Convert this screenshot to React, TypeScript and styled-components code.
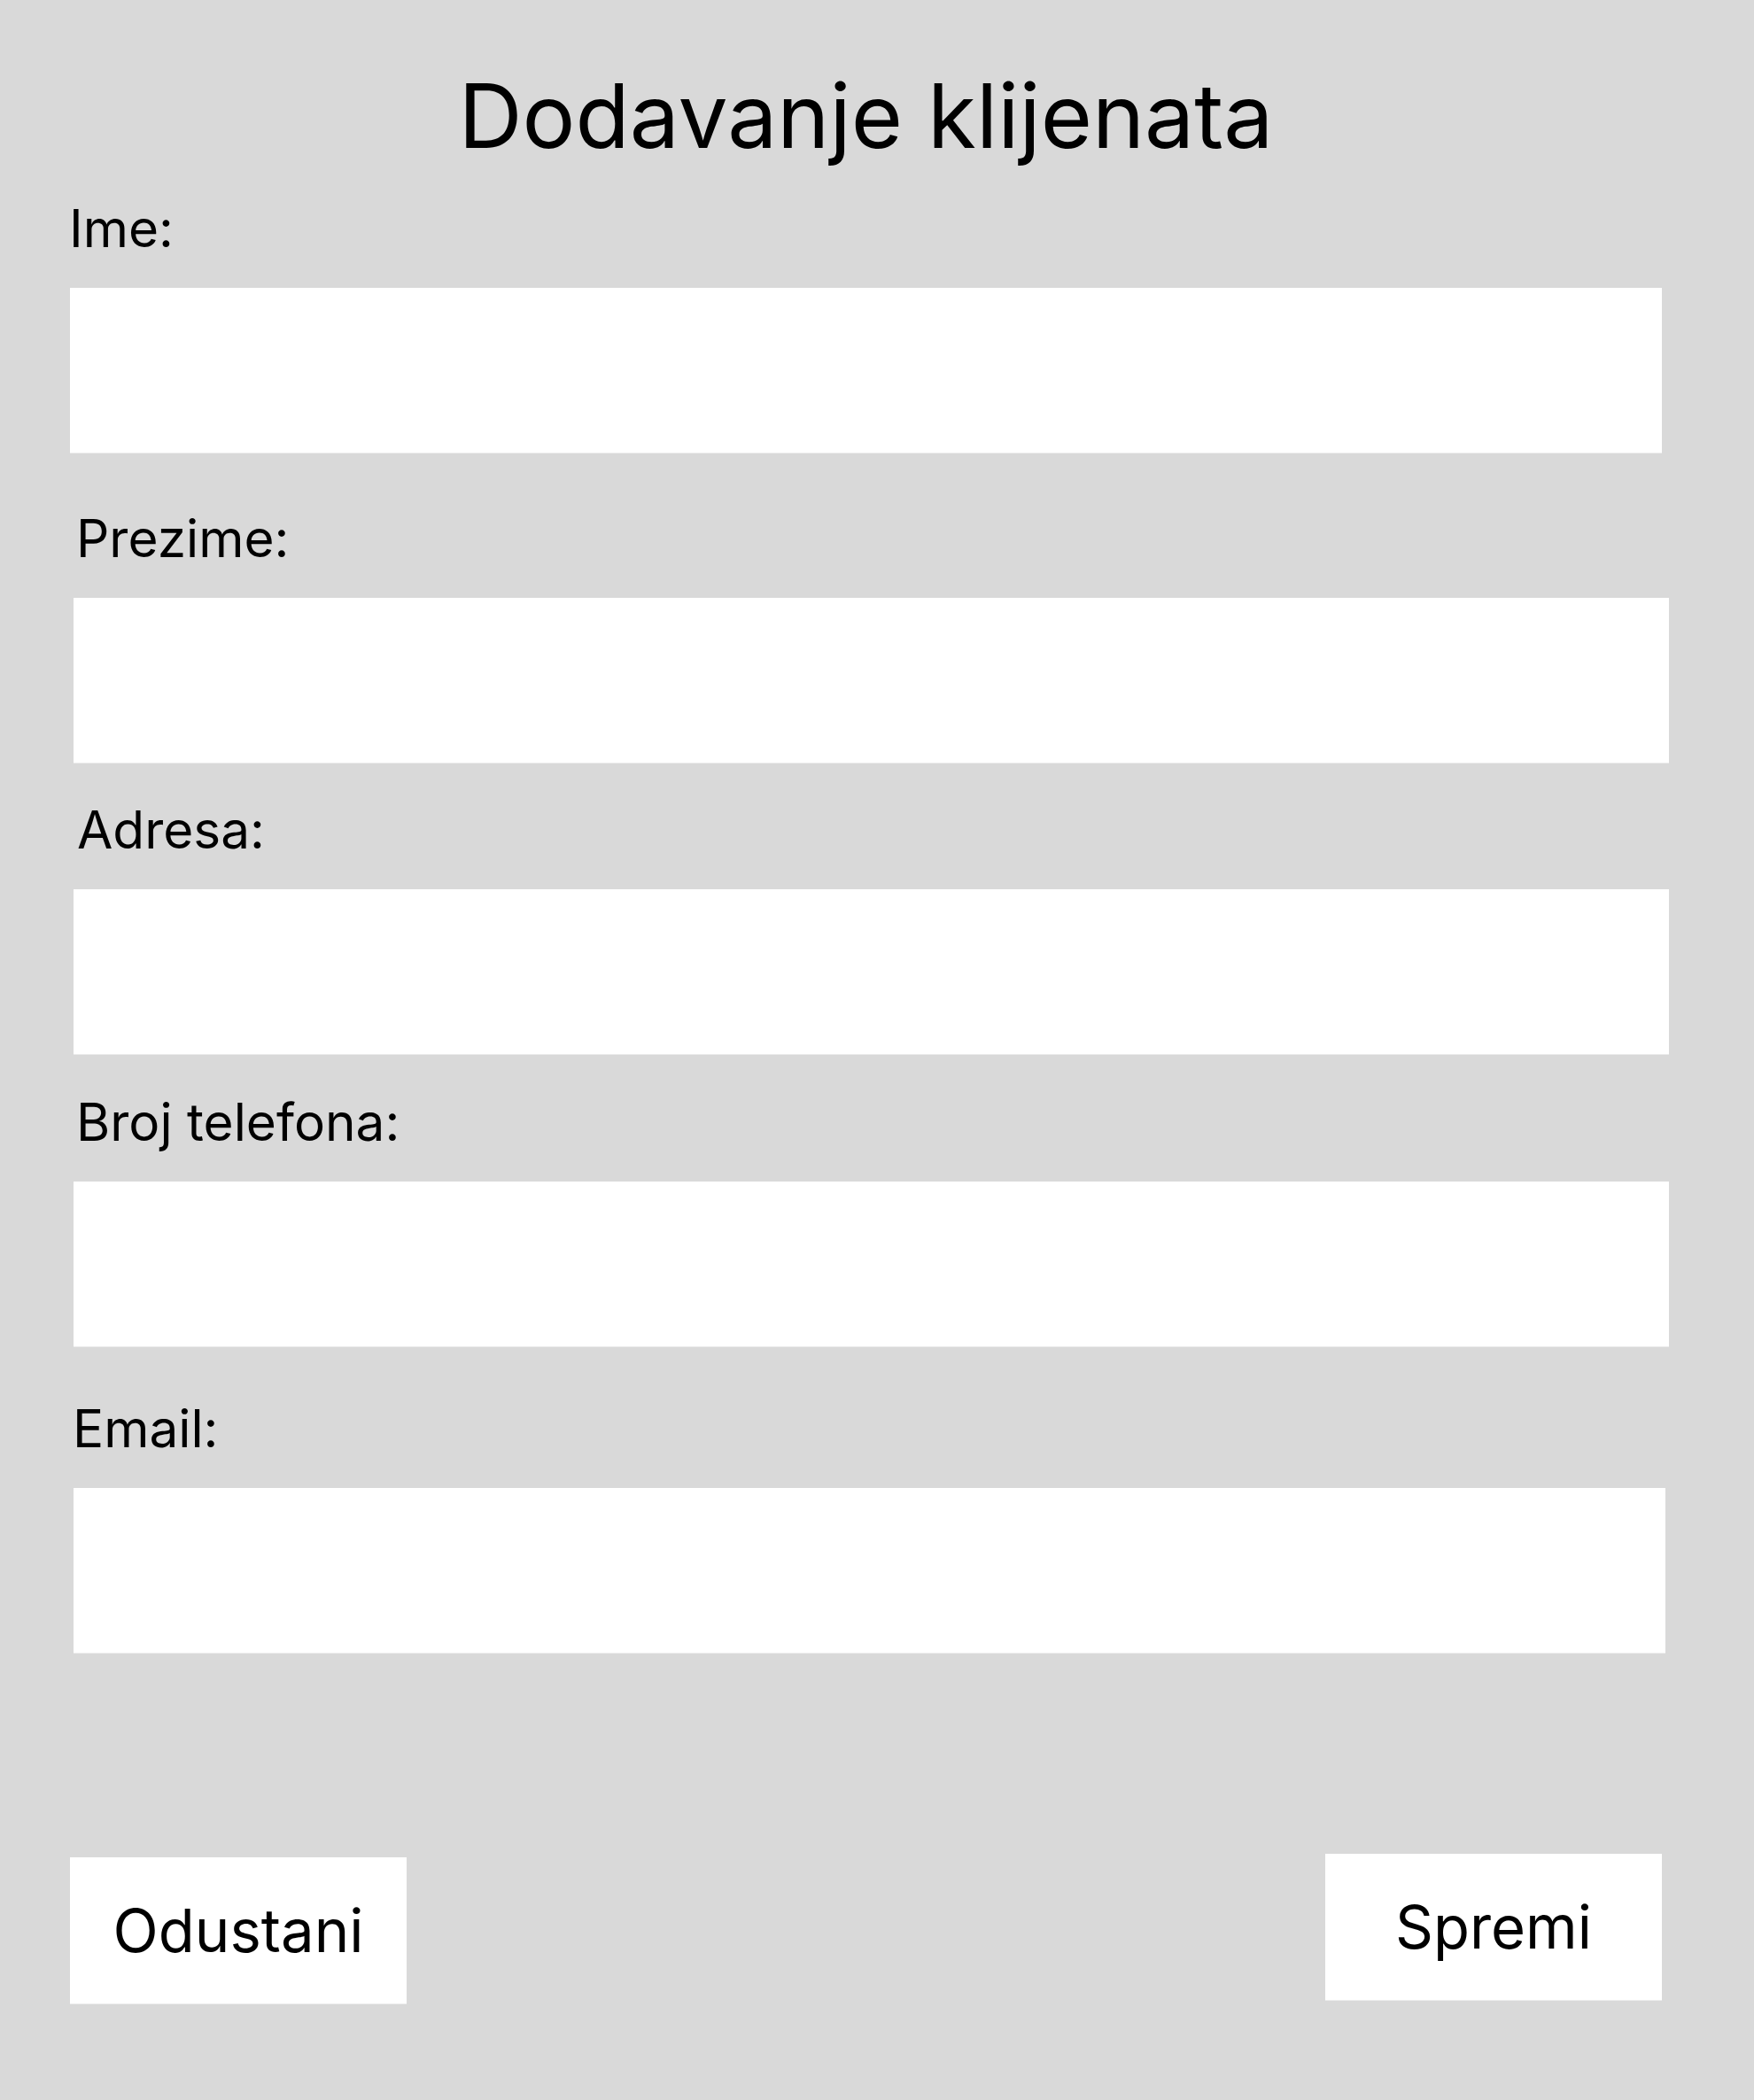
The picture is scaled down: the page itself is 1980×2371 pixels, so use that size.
import React from "react";
import styled, { createGlobalStyle } from "styled-components";

const GlobalStyle = createGlobalStyle`
  html, body {
    margin: 0;
    padding: 0;
    background: #d9d9d9;
  }
  * { box-sizing: border-box; }
`;

const Page = styled.div`
  min-height: 2371px;
  background: #d9d9d9;
  padding: 81px 104px 0 79px;
  font-family: Inter, "Noto Sans", sans-serif;
  color: #000;
  display: flex;
  flex-direction: column;
`;

const Title = styled.h1`
  margin: 0;
  font-size: 100px;
  font-weight: 400;
  line-height: 1;
  text-align: center;
`;

const Form = styled.form`
  display: flex;
  flex-direction: column;
`;

const Field = styled.div<{ $top: number; $shift: number }>`
  display: flex;
  flex-direction: column;
  margin-top: ${(p) => p.$top}px;
  margin-left: ${(p) => p.$shift}px;
`;

const Label = styled.label<{ $indent: number }>`
  font-size: 58.5px;
  line-height: 60px;
  margin-left: ${(p) => p.$indent}px;
  margin-bottom: 37px;
`;

const Input = styled.input<{ $width: number }>`
  width: ${(p) => p.$width}px;
  height: 187px;
  border: none;
  border-bottom: 1px solid #ececec;
  background: #fff;
  outline: none;
  font: inherit;
  font-size: 48px;
  padding: 0 24px;
`;

const Actions = styled.div`
  display: flex;
  justify-content: space-between;
  align-items: flex-start;
  margin-top: 226px;
`;

const Button = styled.button<{ $top: number }>`
  width: 380px;
  height: 166px;
  margin-top: ${(p) => p.$top}px;
  border: none;
  border-bottom: 1px solid #ececec;
  background: #fff;
  font-family: Inter, "Noto Sans", sans-serif;
  font-size: 67px;
  font-weight: 400;
  line-height: 1;
  color: #000;
  cursor: pointer;
`;

const fields = [
  { label: "Ime:", top: 47, shift: 0, indent: -1, width: 1797 },
  { label: "Prezime:", top: 66, shift: 4, indent: 3, width: 1801 },
  { label: "Adresa:", top: 45, shift: 4, indent: 4, width: 1801 },
  { label: "Broj telefona:", top: 46, shift: 4, indent: 3, width: 1801 },
  { label: "Email:", top: 62, shift: 4, indent: -1, width: 1797 },
];

export default function App() {
  return (
    <>
      <GlobalStyle />
      <Page>
        <Title>Dodavanje klijenata</Title>
        <Form onSubmit={(e) => e.preventDefault()}>
          {fields.map((f) => (
            <Field key={f.label} $top={f.top} $shift={f.shift}>
              <Label $indent={f.indent}>{f.label}</Label>
              <Input type="text" $width={f.width} />
            </Field>
          ))}
          <Actions>
            <Button type="button" $top={4}>Odustani</Button>
            <Button type="submit" $top={0}>Spremi</Button>
          </Actions>
        </Form>
      </Page>
    </>
  );
}
